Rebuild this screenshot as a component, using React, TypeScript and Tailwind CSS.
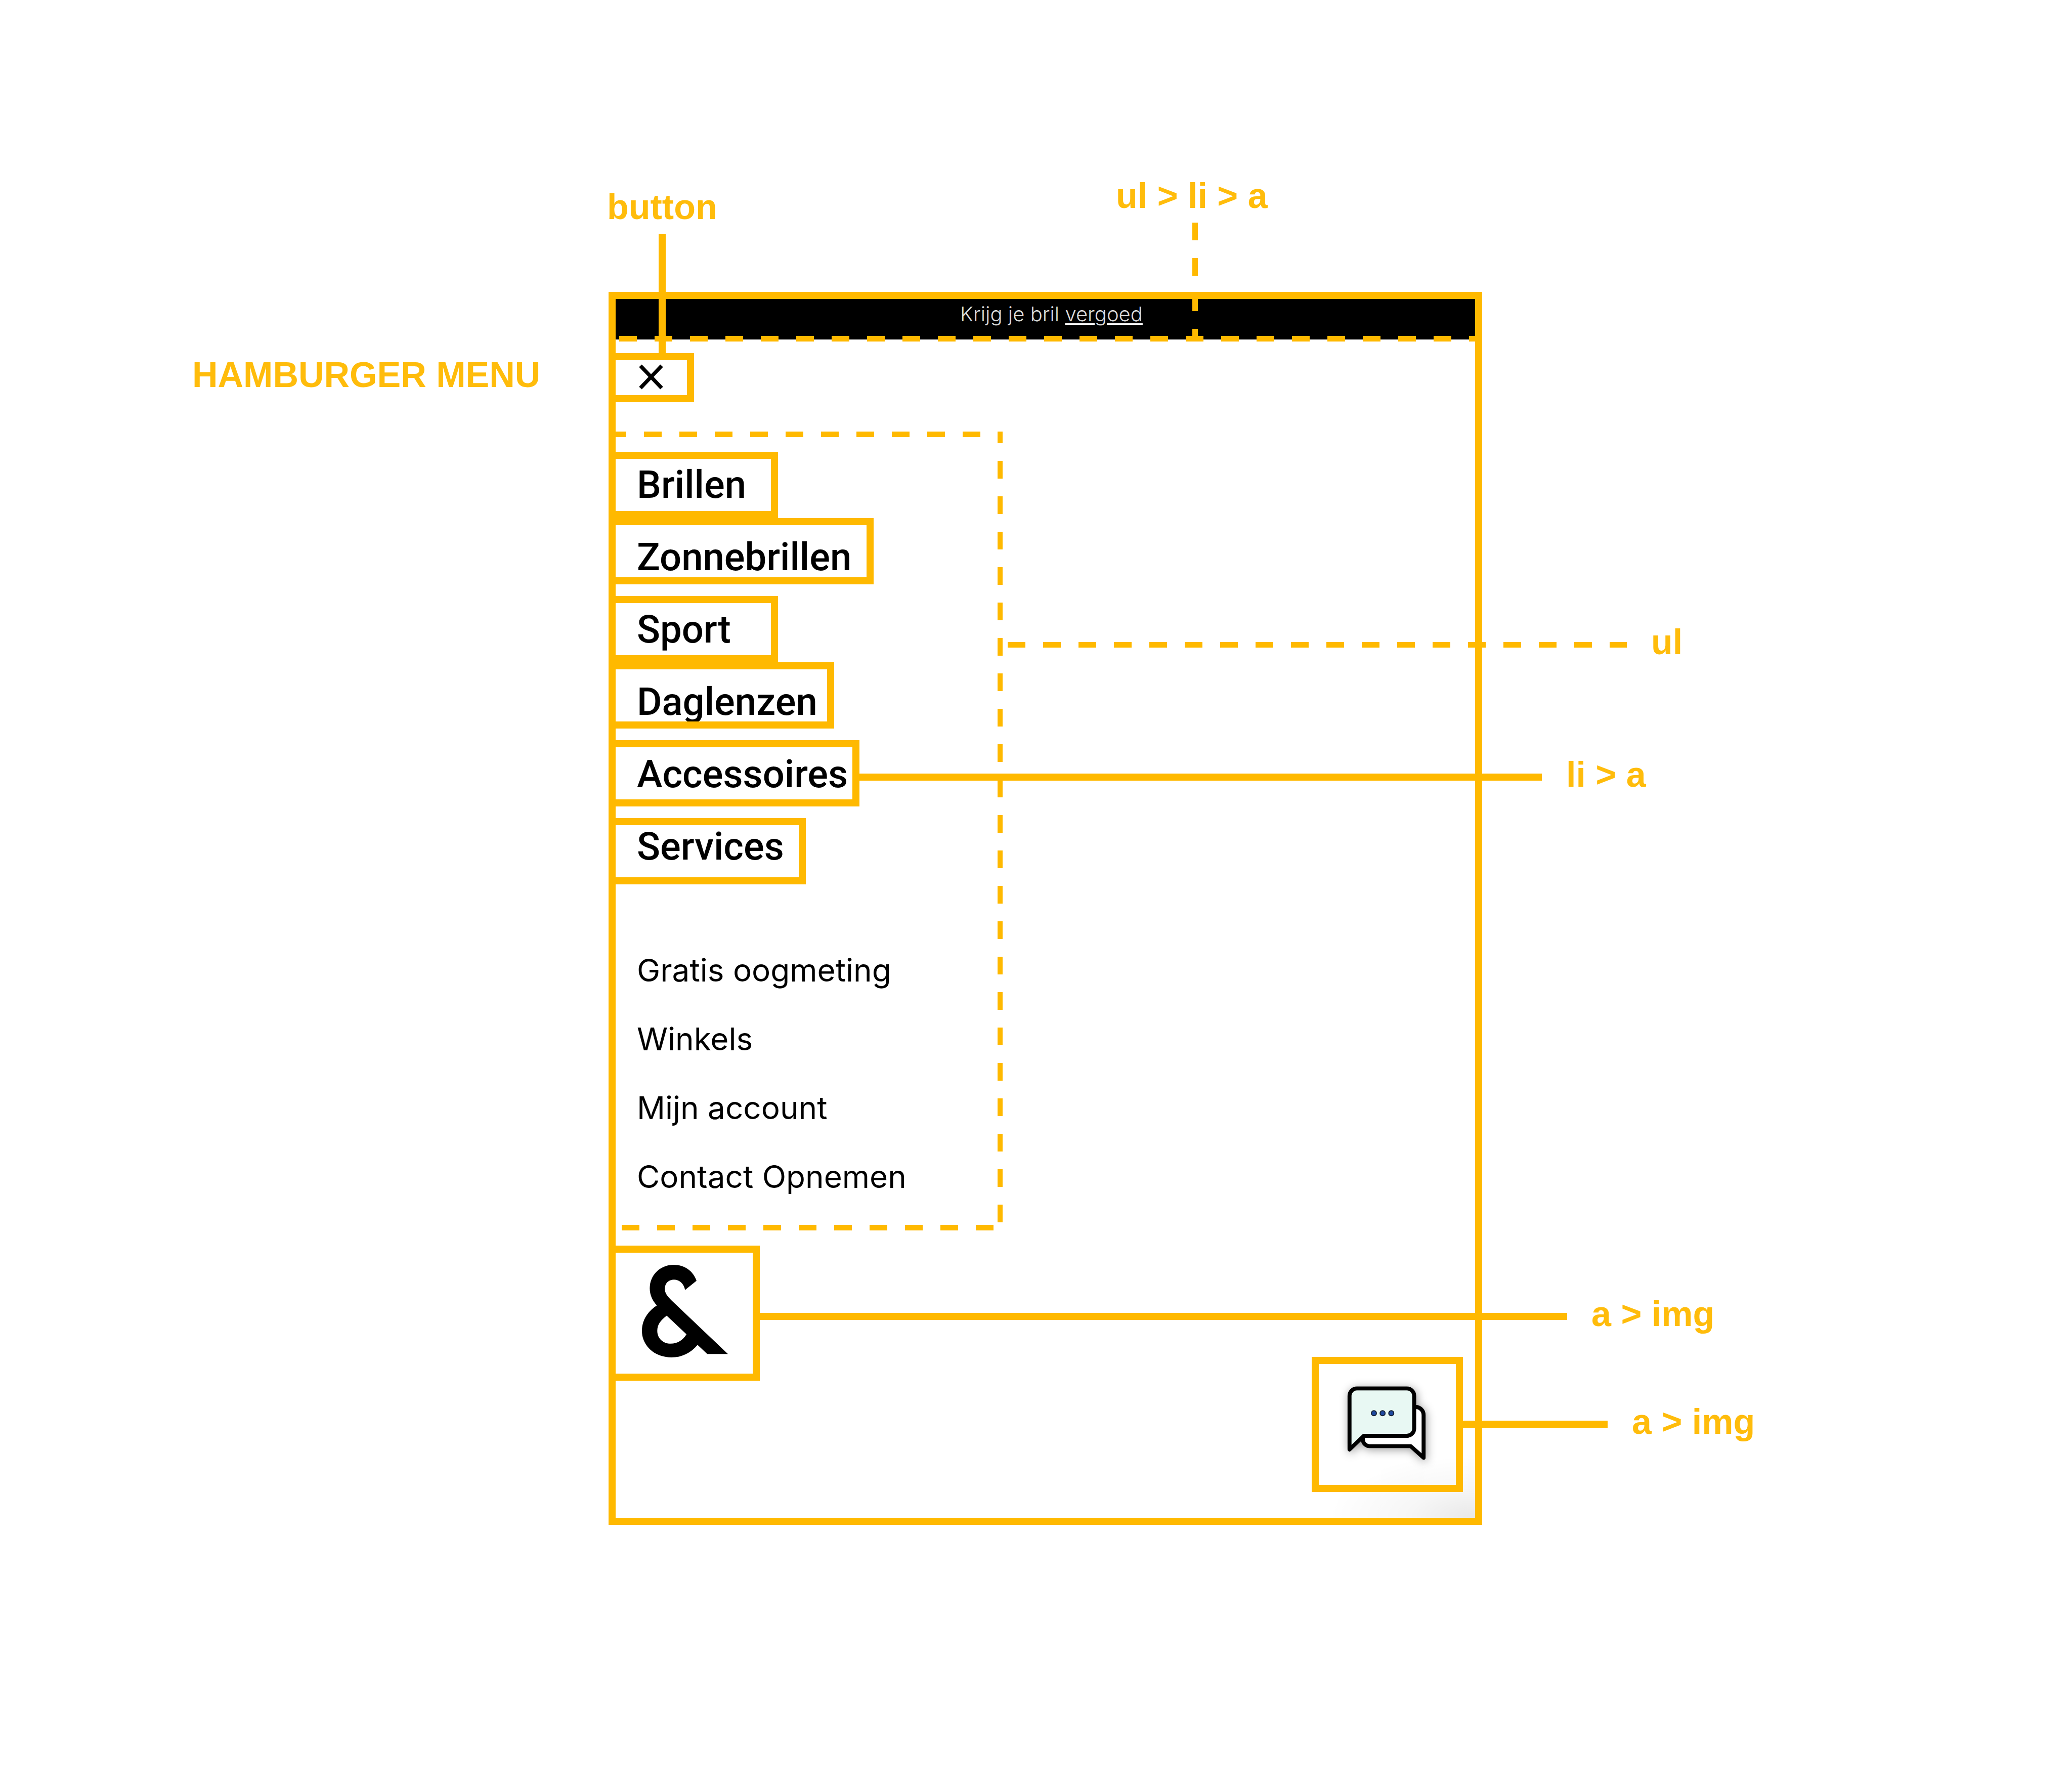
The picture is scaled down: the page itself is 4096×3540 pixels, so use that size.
import type { ReactNode } from 'react';

const primaryLinks = ['Brillen', 'Zonnebrillen', 'Sport', 'Daglenzen', 'Accessoires', 'Services'];
const secondaryLinks = ['Gratis oogmeting', 'Winkels', 'Mijn account', 'Contact Opnemen'];

const dashesX =
  'bg-[repeating-linear-gradient(90deg,#ffb900_0_35px,transparent_35px_70px)]';
const dashesUp =
  'bg-[repeating-linear-gradient(0deg,#ffb900_0_35px,transparent_35px_70px)]';
const dashesDown =
  'bg-[repeating-linear-gradient(180deg,#ffb900_0_35px,transparent_35px_70px)]';

const labelText =
  'font-["Liberation_Sans",Arial,sans-serif] text-[70px] leading-[70px] font-bold whitespace-nowrap text-[#ffbc0b]';

/* A horizontal connector that leaves the right edge of its parent and ends in a label. */
function SideCallout({ line, place, children }: { line: string; place: string; children: ReactNode }) {
  return (
    <div className={`pointer-events-none absolute left-full z-10 flex items-center gap-[48px] ${place}`}>
      <span className={`shrink-0 ${line}`} />
      <span className={`pb-[10px] ${labelText}`}>{children}</span>
    </div>
  );
}

/* A vertical connector that hangs from a label down to its parent. */
function TopCallout({ line, place, children }: { line: string; place: string; children: ReactNode }) {
  return (
    <div className={`pointer-events-none absolute z-10 flex flex-col items-start gap-[18px] ${place}`}>
      <span className={labelText}>{children}</span>
      <span className={line} />
    </div>
  );
}

/* Outline laid over one entry of the menu. */
function Outline({ width, children }: { width: string; children?: ReactNode }) {
  return (
    <div className={`relative h-[131px] border-[14px] border-l-0 border-[#ffb900] ${width}`}>{children}</div>
  );
}

function CloseIcon() {
  return (
    <svg viewBox="0 0 48 50" className="h-[50px] w-[48px]" aria-hidden="true">
      <path d="M3 3 45 47M45 3 3 47" fill="none" stroke="#000" strokeWidth="7.4" />
    </svg>
  );
}

function Ampersand() {
  return (
    <svg viewBox="275 358 583 627" className="h-[183px] w-[170px]" role="img" aria-label="Logo">
      <path
        fillRule="evenodd"
        d="M645 466C624 402 566 358 490 358C398 358 328 428 328 518C328 560 346 600 376 633C312 676 275 734 275 805C275 908 362 985 475 985C545 985 608 954 652 900L718 962H858L478 601C446 570 430 548 430 520C430 484 456 458 492 458C530 458 560 486 567 528ZM443 702L577 828C555 866 516 892 470 892C418 892 379 856 379 805C379 764 400 734 443 702Z"
      />
    </svg>
  );
}

function ChatIcon() {
  return (
    <svg
      viewBox="443 345 530 500"
      className="h-[146px] w-[154px] overflow-visible drop-shadow-[2px_3px_9px_rgba(0,0,0,0.4)]"
      role="img"
      aria-label="Chat"
    >
      <g stroke="#000" strokeWidth="27" strokeLinejoin="round" strokeLinecap="round">
        <path
          d="M896 485H906A54 54 0 0 1 960 539V830L872 751H592A45 45 0 0 1 547 706V681H850Z"
          fill="#fff"
        />
        <path
          d="M506 359H846A50 50 0 0 1 896 409V631A50 50 0 0 1 846 681H553L456 774V409A50 50 0 0 1 506 359Z"
          fill="#e8f8f3"
        />
      </g>
      <g fill="#1f4aa0" stroke="#141f33" strokeWidth="7">
        <circle cx="622" cy="527" r="17" />
        <circle cx="681" cy="527" r="17" />
        <circle cx="740" cy="527" r="17" />
      </g>
    </svg>
  );
}

export default function App() {
  return (
    <main className="grid min-h-screen grid-cols-[1203fr_1727fr_1166fr] items-start overflow-hidden bg-white text-black">
      <h1 className={`mt-[706px] pl-[380px] ${labelText}`}>HAMBURGER MENU</h1>

      <section className="mt-[577px] flex flex-col border-[14px] border-[#ffb900] bg-white">
        <div className="relative h-20 bg-black">
          <p className='pl-6 text-center font-["Inter",sans-serif] text-[40px] leading-[60px] font-light text-[#dcdcdc]'>
            Krijg je bril{' '}
            <a href="#vergoed" className="underline decoration-white decoration-3 underline-offset-4">
              vergoed
            </a>
          </p>
          <div className={`absolute right-0 -bottom-1 left-[7px] h-[11px] ${dashesX}`} />
          <TopCallout
            place="-bottom-1 left-[989px]"
            line={`ml-[151px] h-[235px] w-[11px] ${dashesDown}`}
          >
            ul &gt; li &gt; a
          </TopCallout>
        </div>

        <div className="relative mt-[27px] self-start">
          <button
            type="button"
            aria-label="Sluit menu"
            className="flex h-[97px] w-[155px] items-start border-[14px] border-l-0 border-[#ffb900] pt-2 pl-[46px]"
          >
            <CloseIcon />
          </button>
          <TopCallout place="bottom-full -left-[17px]" line="ml-[102px] h-[236px] w-[14px] bg-[#ffb900]">
            button
          </TopCallout>
        </div>

        <nav className="relative mt-[58px] w-[765px] pt-[34px] pb-[38px] pl-[42px]">
          <ul className='font-["Roboto",sans-serif] text-[76px] leading-[143px] font-medium'>
            {primaryLinks.map((name) => (
              <li key={name}>
                <a href={`#${name.toLowerCase()}`}>{name}</a>
              </li>
            ))}
          </ul>
          <ul className='mt-[105px] font-["Inter",sans-serif] text-[62px] leading-[136px]'>
            {secondaryLinks.map((name) => (
              <li key={name}>
                <a href={`#${name.split(' ')[0].toLowerCase()}`}>{name}</a>
              </li>
            ))}
          </ul>

          <div className={`absolute top-0 right-[10px] -left-[14px] h-[11px] ${dashesX}`} />
          <div className={`absolute top-0 right-0 bottom-[16px] w-[10px] ${dashesUp}`} />
          <div className={`absolute right-[10px] bottom-0 left-[12px] h-[11px] ${dashesX}`} />
          <SideCallout place="top-[381px] ml-[10px]" line={`h-[11px] w-[1224px] ${dashesX}`}>
            ul
          </SideCallout>

          <div className="pointer-events-none absolute top-[40px] left-0 flex flex-col gap-[23px]">
            <div>
              <Outline width="w-[321px]" />
              <Outline width="w-[510px]" />
            </div>
            <div>
              <Outline width="w-[321px]" />
              <Outline width="w-[432px]" />
            </div>
            <Outline width="w-[482px]">
              <SideCallout place="top-[19px]" line="h-[14px] w-[1363px] bg-[#ffb900]">
                li &gt; a
              </SideCallout>
            </Outline>
            <Outline width="w-[376px]" />
          </div>
        </nav>

        <footer className="flex items-start justify-between bg-[radial-gradient(ellipse_290px_125px_at_100%_100%,#e8e8e8,#f6f6f6_45%,#ffffff)] pt-[30px] pb-[51px]">
          <a
            href="#home"
            className="relative h-[267px] w-[285px] border-[14px] border-l-0 border-[#ffb900] pt-[24px] pl-[52px]"
          >
            <Ampersand />
            <SideCallout place="top-[86px]" line="h-[14px] w-[1610px] bg-[#ffb900]">
              a &gt; img
            </SideCallout>
          </a>
          <a
            href="#chat"
            className="relative mt-[220px] mr-[24px] h-[267px] w-[299px] border-[14px] border-[#ffb900] pt-[44px] pl-[57px]"
          >
            <ChatIcon />
            <SideCallout place="top-[79px]" line="h-[14px] w-[300px] bg-[#ffb900]">
              a &gt; img
            </SideCallout>
          </a>
        </footer>
      </section>
    </main>
  );
}
